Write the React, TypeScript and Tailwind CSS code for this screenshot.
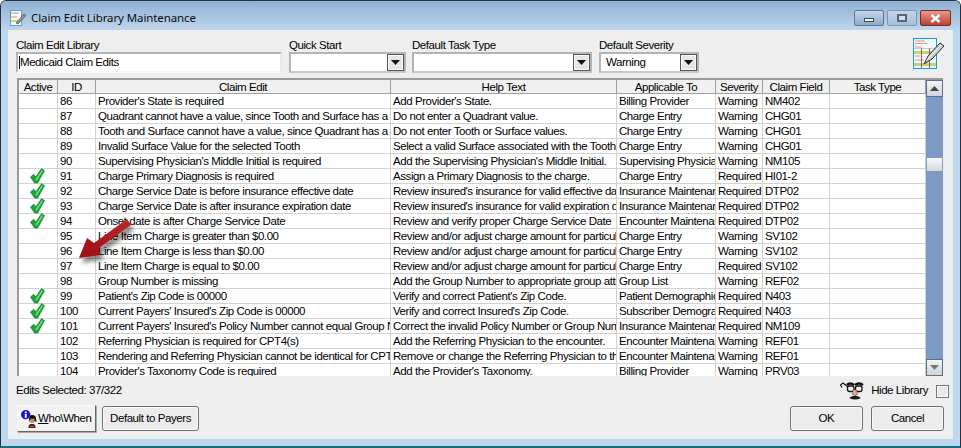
import React from "react";

type Row = [string, string, string, string, string, string, boolean];
const rows: Row[] = [
  ["86", "Provider's State is required", "Add Provider's State.", "Billing Provider", "Warning", "NM402", false],
  ["87", "Quadrant cannot have a value, since Tooth and Surface has a value", "Do not enter a Quadrant value.", "Charge Entry", "Warning", "CHG01", false],
  ["88", "Tooth and Surface cannot have a value, since Quadrant has a value", "Do not enter Tooth or Surface values.", "Charge Entry", "Warning", "CHG01", false],
  ["89", "Invalid Surface Value for the selected Tooth", "Select a valid Surface associated with the Tooth.", "Charge Entry", "Warning", "CHG01", false],
  ["90", "Supervising Physician's Middle Initial is required", "Add the Supervising Physician's Middle Initial.", "Supervising Physician", "Warning", "NM105", false],
  ["91", "Charge Primary Diagnosis is required", "Assign a Primary Diagnosis to the charge.", "Charge Entry", "Required", "HI01-2", true],
  ["92", "Charge Service Date is before insurance effective date", "Review insured's insurance for valid effective date.", "Insurance Maintenance", "Required", "DTP02", true],
  ["93", "Charge Service Date is after insurance expiration date", "Review insured's insurance for valid expiration date.", "Insurance Maintenance", "Required", "DTP02", true],
  ["94", "Onset date is after Charge Service Date", "Review and verify proper Charge Service Date", "Encounter Maintenance", "Required", "DTP02", true],
  ["95", "Line Item Charge is greater than $0.00", "Review and/or adjust charge amount for particular", "Charge Entry", "Warning", "SV102", false],
  ["96", "Line Item Charge is less than $0.00", "Review and/or adjust charge amount for particular", "Charge Entry", "Warning", "SV102", false],
  ["97", "Line Item Charge is equal to $0.00", "Review and/or adjust charge amount for particular", "Charge Entry", "Required", "SV102", false],
  ["98", "Group Number is missing", "Add the Group Number to appropriate group attribute", "Group List", "Warning", "REF02", false],
  ["99", "Patient's Zip Code is 00000", "Verify and correct Patient's Zip Code.", "Patient Demographics", "Required", "N403", true],
  ["100", "Current Payers' Insured's Zip Code is 00000", "Verify and correct Insured's Zip Code.", "Subscriber Demographics", "Required", "N403", true],
  ["101", "Current Payers' Insured's Policy Number cannot equal Group Number", "Correct the invalid Policy Number or Group Number", "Insurance Maintenance", "Required", "NM109", true],
  ["102", "Referring Physician is required for CPT4(s)", "Add the Referring Physician to the encounter.", "Encounter Maintenance", "Warning", "REF01", false],
  ["103", "Rendering and Referring Physician cannot be identical for CPT4(s)", "Remove or change the Referring Physician to the", "Encounter Maintenance", "Warning", "REF01", false],
  ["104", "Provider's Taxonomy Code is required", "Add the Provider's Taxonomy.", "Billing Provider", "Warning", "PRV03", false],
];

function Check() {
  return (
    <svg width="15" height="16" viewBox="0 0 15 16" className="shrink-0">
      <path d="M0.5 9 L3.8 6.3 L5.8 9 L11.5 0.7 L14.5 2.6 L7.6 15 L4.6 15 Z" fill="#1aa83a" stroke="#11752a" strokeWidth="0.7" />
      <path d="M5.4 11.4 L11.9 2.2 L13 3 L6.6 12.8 Z" fill="#6fe07c" />
    </svg>
  );
}

function DropBtn() {
  return (
    <div className="w-[17px] h-[17px] bg-[#e6e6e6] border border-[#555] shadow-[inset_0_0_0_1px_#fafafa] flex items-center justify-center shrink-0">
      <svg width="9" height="5" viewBox="0 0 9 5"><path d="M0 0H9L4.5 5Z" fill="#111" /></svg>
    </div>
  );
}

function Combo({ width, value, label, gap }: { width: string; value?: string; label: string; gap: string }) {
  return (
    <div className={`flex flex-col shrink-0 ${width} ${gap}`}>
      <div className="h-[14px] leading-[14px]">{label}</div>
      <div className="h-[21px] bg-white border-2 border-[#b4b4b4] border-b-[#c8c8c8] flex items-center justify-between pl-[5px]">
        <span>{value}</span>
        <DropBtn />
      </div>
    </div>
  );
}

function Cell({ w, className = "", children }: { w: string; className?: string; children?: React.ReactNode }) {
  return <div className={`${w} shrink-0 h-[14px] overflow-hidden whitespace-nowrap border-r border-[#d2d2d2] leading-[14px] ${className}`}>{children}</div>;
}

function Head({ w, children }: { w: string; children?: React.ReactNode }) {
  return <div className={`${w} shrink-0 h-[13px] border-r border-[#a0a0a0] leading-[14px] text-center`}>{children}</div>;
}

function LibraryIcon() {
  return (
    <svg width="32" height="31" viewBox="0 0 32 31" className="shrink-0">
      <rect x="0.5" y="0.5" width="23" height="30" fill="#eef7fb" stroke="#119ddb" />
      <rect x="1" y="13" width="22" height="3" fill="#cfcf62" />
      <rect x="1" y="25" width="22" height="3" fill="#c9cf70" />
      <path d="M2 3h10M2 5.5h12M2 9h7M2 18h5M2 22h9" stroke="#f0927a" strokeWidth="1" />
      <path d="M8.5 10V30M16.5 10V30" stroke="#6d6d6d" strokeWidth="1" />
      <path d="M1 10.5H23" stroke="#9bb" strokeWidth="0.6" />
      <path d="M11 26L15 18L27 5L31 8L19 21Z" fill="#c9c9c9" stroke="#333" strokeWidth="1" />
      <path d="M14 22L28 7" stroke="#fff" strokeWidth="1" />
    </svg>
  );
}

function InfoPerson() {
  return (
    <svg width="18" height="18" viewBox="0 0 18 18" className="shrink-0">
      <path d="M7.5 18 Q7.5 14 10 14 H12 Q14.5 14 14.5 18Z" fill="#33241c" />
      <circle cx="11" cy="10" r="3" fill="#c88f63" />
      <path d="M8 9.5 Q8 5 11 5 Q15 5 15 8.5 L15.5 12 L13.5 11 L13.5 8.5 Q10.5 9 9.5 8.5 L9 11Z" fill="#111" />
      <path d="M9 16.5 H13" stroke="#c65a20" strokeWidth="1.2" />
      <circle cx="4.7" cy="4.6" r="4.4" fill="#1414e0" stroke="#0a0a70" strokeWidth="0.5" />
      <rect x="3.8" y="1.6" width="1.9" height="1.6" fill="#fff" />
      <rect x="3.8" y="3.9" width="1.9" height="4" fill="#fff" />
    </svg>
  );
}

function Disguise() {
  return (
    <svg width="24" height="20" viewBox="0 0 24 20" className="shrink-0">
      <path d="M7 4 Q10 1 14 4 M15 4 Q19 1 23 4" stroke="#111" strokeWidth="2.6" fill="none" />
      <rect x="7.5" y="5" width="6.5" height="5.5" rx="2" fill="#f4f4f4" stroke="#111" strokeWidth="1.3" />
      <rect x="15.5" y="5" width="6.5" height="5.5" rx="2" fill="#f4f4f4" stroke="#111" strokeWidth="1.3" />
      <path d="M8 6 L3 2 L0.5 4 L2 6.5" stroke="#111" strokeWidth="1.1" fill="none" />
      <path d="M13 9 L16.5 9 L17.5 13.5 Q15 15.5 12.5 13.5Z" fill="#e8a888" stroke="#80503a" strokeWidth="0.6" />
      <path d="M9 17 Q15 12.5 21 17 Q15 20 9 17Z" fill="#1c1c1c" />
    </svg>
  );
}

function Arrow() {
  return (
    <svg className="absolute left-[70px] top-[210px] pointer-events-none" width="76" height="62" viewBox="0 0 76 62">
      <defs>
        <filter id="arrow-blur" x="-30%" y="-30%" width="160%" height="160%">
          <feGaussianBlur stdDeviation="2" />
        </filter>
        <linearGradient id="arrow-fill" x1="1" y1="0" x2="0" y2="1">
          <stop offset="0" stopColor="#b92a2a" />
          <stop offset="1" stopColor="#a00c16" />
        </linearGradient>
      </defs>
      <path d="M9 48 L17 28 L24 33 L57 9 L61 15 L29 38 L30 45 Z" fill="#000" opacity="0.45" filter="url(#arrow-blur)" transform="translate(3,5)" />
      <path d="M9 48 L17 28 L24 33 L57 9 L61 15 L29 38 L30 45 Z" fill="url(#arrow-fill)" />
    </svg>
  );
}

export default function App() {
  return (
    <div
      className="relative w-[961px] h-[448px] bg-white overflow-hidden text-[11.5px] tracking-[-0.43px] text-black"
      style={{ fontFamily: '"Liberation Sans", Arial, sans-serif' }}
    >
      <div className="w-[961px] h-[448px] rounded-t-[6px] overflow-hidden border border-[#26333d] border-b-2 border-b-[#17707f] bg-[#bcd7ee] flex flex-col">
        <div className="h-[29px] shrink-0 flex justify-between bg-gradient-to-b from-[#8fb0d3] to-[#bfd5ea] pl-[9px] pr-[9px]">
          <div className="flex items-start pt-[9px]">
            <svg width="17" height="16" viewBox="0 0 17 16" className="shrink-0">
              <rect x="0.5" y="0.5" width="11" height="15" fill="#f6fafa" stroke="#2a9ad8" strokeWidth="0.8" />
              <path d="M1 3h8M1 7h6" stroke="#ee8a60" />
              <path d="M1 11h10" stroke="#d7d66a" strokeWidth="2" />
              <path d="M6 13L14 4L16 5.5L8 14Z" fill="#999" stroke="#333" strokeWidth="0.6" />
            </svg>
            <span
              className="ml-[4px] -mt-[1px] text-[11.5px] tracking-[-0.1px] leading-[18px] text-[#0c0c14]"
              style={{ fontFamily: '"Noto Sans", sans-serif' }}
            >
              Claim Edit Library Maintenance
            </span>
          </div>
          <div className="flex items-start gap-[3px] pt-[9px]">
            <div className="w-[30px] h-[16px] rounded-[2px] border border-[#5f7690] bg-gradient-to-b from-[#c5d6e8] to-[#8eabc9] flex items-end justify-center pb-[3px]">
              <div className="w-[10px] h-[4px] bg-white/90 border border-[#3a4a5a]" />
            </div>
            <div className="w-[30px] h-[16px] rounded-[2px] border border-[#7f97b0] bg-gradient-to-b from-[#c5d6e8] to-[#a4bed8] flex items-center justify-center">
              <div className="w-[10px] h-[8px] bg-white/40 border-2 border-[#3a4a5a]/80" />
            </div>
            <div className="w-[31px] h-[16px] rounded-[2px] border border-[#7a2a20] bg-gradient-to-b from-[#e49a8c] to-[#bd3f30] flex items-center justify-center">
              <svg width="11" height="9" viewBox="0 0 11 9"><path d="M1.5 1L9.5 8M9.5 1L1.5 8" stroke="#fff" strokeWidth="2.4" /></svg>
            </div>
          </div>
        </div>

        <div className="h-[409px] mx-[7px] shrink-0 bg-[#eeeeee] flex flex-col pl-[8px] pr-[8px]">
          <div className="h-[48px] shrink-0 flex items-start pt-[8px]">
            <div className="flex flex-col w-[266px] mr-[7px] shrink-0">
              <div className="h-[14px] leading-[14px]">Claim Edit Library</div>
              <div className="h-[21px] bg-white border-2 border-[#b4b4b4] border-r-[#e8e8e8] border-b-[#f6f6f6] flex items-center pl-[1px]">
                <span className="border-l border-[#111] leading-[13px]">Medicaid Claim Edits</span>
              </div>
            </div>
            <Combo width="w-[117px]" gap="mr-[6px]" label="Quick Start" />
            <Combo width="w-[180px]" gap="mr-[7px]" label="Default Task Type" />
            <Combo width="w-[100px]" gap="mr-0" label="Default Severity" value="Warning" />
            <div className="ml-auto"><LibraryIcon /></div>
          </div>

          <div className="relative w-[926px] h-[298px] shrink-0 ml-[1px] border-l-2 border-t-2 border-[#9a9a9a] bg-white overflow-hidden flex">
            <div className="w-[907px] shrink-0 flex flex-col">
              <div className="flex h-[14px] shrink-0 border-b border-[#a0a0a0] bg-[#f0f0f0]">
                <Head w="w-[39px]">Active</Head>
                <Head w="w-[38px]">ID</Head>
                <Head w="w-[295px]">Claim Edit</Head>
                <Head w="w-[226px]">Help Text</Head>
                <Head w="w-[99px]">Applicable To</Head>
                <Head w="w-[47px]">Severity</Head>
                <Head w="w-[67px]">Claim Field</Head>
                <Head w="w-[96px]">Task Type</Head>
              </div>
              {rows.map((r) => (
                <div key={r[0]} className="flex h-[15px] border-b border-[#d2d2d2] shrink-0">
                  <Cell w="w-[39px]" className="flex justify-center items-center overflow-visible pr-[2px]">{r[6] ? <Check /> : null}</Cell>
                  <Cell w="w-[38px]" className="pl-[2px]">{r[0]}</Cell>
                  <Cell w="w-[295px]" className="pl-[2px]">{r[1]}</Cell>
                  <Cell w="w-[226px]" className="pl-[2px]">{r[2]}</Cell>
                  <Cell w="w-[99px]" className="pl-[2px]">{r[3]}</Cell>
                  <Cell w="w-[47px]" className="pl-[2px]">{r[4]}</Cell>
                  <Cell w="w-[67px]" className="pl-[2px]">{r[5]}</Cell>
                  <Cell w="w-[96px]" />
                </div>
              ))}
            </div>
            <div className="w-[17px] h-full shrink-0 flex flex-col bg-[#7b9bc4]">
              <div className="h-[17px] shrink-0 bg-gradient-to-b from-[#f4f4f4] to-[#cfd3da] border border-[#5a6f8a] flex items-center justify-center">
                <svg width="9" height="5" viewBox="0 0 9 5"><path d="M0 5H9L4.5 0Z" fill="#444" /></svg>
              </div>
              <div className="h-[60px] shrink-0" />
              <div className="h-[15px] shrink-0 bg-gradient-to-b from-[#f8f8f8] to-[#d4d8e0] border border-[#8a9ab0]" />
              <div className="flex-1" />
              <div className="h-[17px] shrink-0 bg-gradient-to-b from-[#f4f4f4] to-[#cfd3da] border border-[#5a6f8a] flex items-center justify-center">
                <svg width="9" height="5" viewBox="0 0 9 5"><path d="M0 0H9L4.5 5Z" fill="#777" /></svg>
              </div>
            </div>
          </div>

          <div className="flex items-center justify-between h-[29px] shrink-0">
            <span>Edits Selected: 37/322</span>
            <div className="flex items-center">
              <Disguise />
              <span className="ml-[7px] mr-[8px] mt-[1px]">Hide Library</span>
              <div className="w-[13px] h-[13px] mt-[1px] bg-[#e8e8e8] border border-[#777] shadow-[inset_0_0_0_1px_#fafafa] -mr-[4px]" />
            </div>
          </div>

          <div className="flex items-start justify-between">
            <div className="flex">
              <button className="w-[79px] h-[27px] ml-[1px] bg-[#f2f2f2] border border-[#fafafa] border-r-[#666] border-b-[#666] flex items-center pl-[3px] shadow-[1px_1px_0_#aaa]">
                <InfoPerson />
                <span className="ml-[-1px]"><span className="underline">W</span>ho\When</span>
              </button>
              <button className="w-[97px] h-[25px] mt-[1px] ml-[6px] bg-[#ececec] border border-[#707070] rounded-[3px] shadow-[inset_0_0_0_1px_#f8f8f8]">Default to Payers</button>
            </div>
            <div className="flex gap-[8px] mt-[1px]">
              <button className="w-[73px] h-[25px] bg-[#ececec] border border-[#707070] rounded-[3px] shadow-[inset_0_0_0_1px_#f8f8f8]">OK</button>
              <button className="w-[73px] h-[25px] bg-[#ececec] border border-[#707070] rounded-[3px] shadow-[inset_0_0_0_1px_#f8f8f8] mr-[1px]">Cancel</button>
            </div>
          </div>
        </div>
      </div>
      <Arrow />
    </div>
  );
}
